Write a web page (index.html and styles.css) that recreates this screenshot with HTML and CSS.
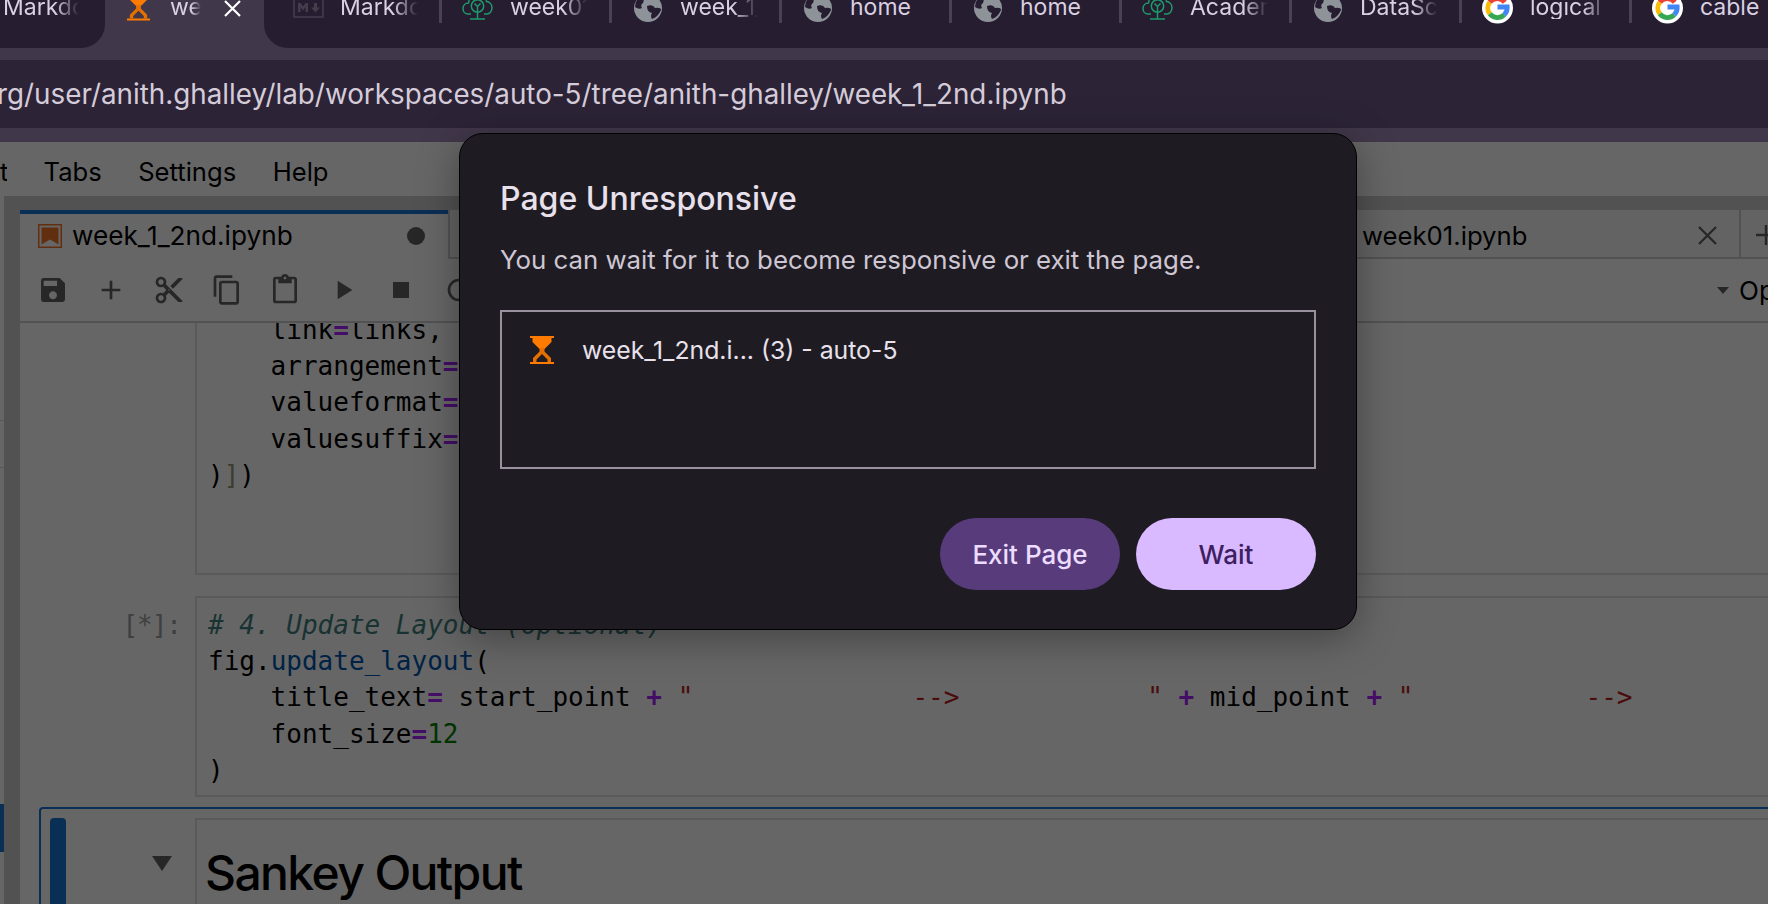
FILE: index.html
```html
<!DOCTYPE html>
<html lang="en">
<head>
<meta charset="utf-8">
<title>Page Unresponsive</title>
<link rel="stylesheet" href="styles.css">
</head>
<body>
<svg class="defs" width="0" height="0" aria-hidden="true">
  <symbol id="hourglass" viewBox="0 0 24 28">
    <path d="M0 0h24v2H0zM0 26h24v2H0z" fill="#ff7b00"/>
    <path d="M2.500 2h19v4l-7 7h-5l-7-7z" fill="#ff7b00"/>
    <path d="M9.500 12v3.500L3 22v4h3.500v-2.500L12 18l5.500 5.500V26H21v-4l-6.500-6.500V12z" fill="#e56f00"/>
  </symbol>
  <symbol id="globe" viewBox="0 0 28 28">
    <circle cx="14" cy="14" r="14" fill="#8e9399"/>
    <path d="M7 2 Q11 5 9 9 Q6 11 8 14 Q5 16 1 13 Q1 6 7 2zM13 12 Q19 10 21 14 Q27 13 27 16 Q24 23 18 25 Q16 22 18 19 Q13 18 13 12z" fill="#261d30"/>
  </symbol>
  <symbol id="academy" viewBox="0 0 31 28">
    <path d="M9 22H6C3 22 1 19.500 1 16.500C1 13 3.500 11 6.500 11C7.500 5 11 1 15.500 1C20 1 23.500 4 24.500 9.500C27.500 9.500 30 12.500 30 15.500C30 19.500 27.500 22 25 22H22" fill="none" stroke="#1f9a6b" stroke-width="1.500"/>
    <circle cx="15.500" cy="14" r="6.200" fill="none" stroke="#1f9a6b" stroke-width="1.500"/>
    <path d="M15.500 20.500V27M15.500 14.500V20M15.500 14.500l-3-3M15.500 14.500l3-3M8 27h15" fill="none" stroke="#1f9a6b" stroke-width="1.500"/>
  </symbol>
  <symbol id="google" viewBox="0 0 32 32">
    <circle cx="16" cy="16" r="16" fill="#fff"/>
    <path d="M23.500 10 A10 10 0 0 0 8 10" fill="none" stroke="#ea4335" stroke-width="5"/>
    <path d="M8 10 A10 10 0 0 0 8 22" fill="none" stroke="#fbbc05" stroke-width="5"/>
    <path d="M8 22 A10 10 0 0 0 23 23" fill="none" stroke="#34a853" stroke-width="5"/>
    <path d="M23 23 A10 10 0 0 0 26 15 H16" fill="none" stroke="#4285f4" stroke-width="5"/>
  </symbol>
  <symbol id="markdown" viewBox="0 0 31 21">
    <path d="M1 1h29v19H1z" fill="none" stroke="#443e4c" stroke-width="1.600"/>
    <path d="M5 15V6h2.500L10 9.500 12.500 6H15v9h-2.500v-5L10 13.500 7.500 10v5zM21 6h3v4.500h3l-4.500 5-4.500-5h3z" fill="#443e4c"/>
  </symbol>
</svg>

<header class="chrome">
  <div class="tabstrip">
    <div class="tabgroup tabgroup-left">
      <span class="tab-label tab-label-left">Markdown</span>
    </div>
    <div class="tab-active">
      <svg class="ico-hourglass-tab"><use href="#hourglass"/></svg>
      <span class="tab-label tab-label-active">week_1</span>
      <svg class="ico-close" viewBox="0 0 17 17"><path d="M1 1l15 15M16 1L1 16" stroke="#fff" stroke-width="2.200" fill="none"/></svg>
    </div>
    <div class="tabgroup tabgroup-right">
      <div class="tab tab-first"><span class="tabicon"><svg class="ico-md"><use href="#markdown"/></svg></span><span class="tab-label">Markdown</span></div><i class="sep"></i>
      <div class="tab"><span class="tabicon"><svg class="ico-acad"><use href="#academy"/></svg></span><span class="tab-label">week01.ipynb</span></div><i class="sep"></i>
      <div class="tab"><span class="tabicon"><svg class="ico-globe"><use href="#globe"/></svg></span><span class="tab-label">week_1_2nd</span></div><i class="sep"></i>
      <div class="tab"><span class="tabicon"><svg class="ico-globe"><use href="#globe"/></svg></span><span class="tab-label tab-label-plain">home</span></div><i class="sep"></i>
      <div class="tab"><span class="tabicon"><svg class="ico-globe"><use href="#globe"/></svg></span><span class="tab-label tab-label-plain">home</span></div><i class="sep"></i>
      <div class="tab"><span class="tabicon"><svg class="ico-acad"><use href="#academy"/></svg></span><span class="tab-label">Academy</span></div><i class="sep"></i>
      <div class="tab"><span class="tabicon"><svg class="ico-globe"><use href="#globe"/></svg></span><span class="tab-label">DataScience</span></div><i class="sep"></i>
      <div class="tab"><span class="tabicon"><svg class="ico-g"><use href="#google"/></svg></span><span class="tab-label">logical</span></div><i class="sep"></i>
      <div class="tab"><span class="tabicon"><svg class="ico-g"><use href="#google"/></svg></span><span class="tab-label tab-label-plain">cable</span></div>
    </div>
  </div>
  <div class="address"><span class="url">rg/user/anith.ghalley/lab/workspaces/auto-5/tree/anith-ghalley/week_1_2nd.ipynb</span></div>
</header>

<main class="page">
  <nav class="menubar">
    <span class="menu-cut">t</span>
    <span>Tabs</span>
    <span>Settings</span>
    <span>Help</span>
  </nav>
  <div class="workspace">
    <aside class="rail">
      <i class="rail-line rail-line-a"></i>
      <i class="rail-line rail-line-b"></i>
      <i class="rail-active"></i>
    </aside>
    <section class="panel">
      <div class="doc-tabs">
        <div class="doc-tab doc-tab-active">
          <svg class="ico-nb" viewBox="0 0 24 24"><path d="M.75.75h22.500v22.500H.75z" fill="none" stroke="#f37726" stroke-width="1.500"/><path d="M3.500 3.500h17v17L12 15.500l-8.500 5z" fill="#f37726"/></svg>
          <span class="doc-name">week_1_2nd.ipynb</span>
          <i class="dirty-dot"></i>
        </div>
        <div class="doc-tab-spacer"></div>
        <div class="doc-tab-other">
          <span class="doc-name">week01.ipynb</span>
          <svg class="ico-x" viewBox="0 0 20 20"><path d="M1 1l18 18M19 1L1 19" stroke="#616161" stroke-width="2.400" fill="none"/></svg>
        </div>
        <div class="doc-tab-add"><svg class="ico-plus" viewBox="0 0 20 20"><path d="M10 0v20M0 10h20" stroke="#616161" stroke-width="2.400"/></svg></div>
      </div>
      <div class="toolbar">
        <span class="tool"><svg viewBox="0 0 24 24"><path d="M17 3H5c-1.110 0-2 .9-2 2v14c0 1.100.89 2 2 2h14c1.100 0 2-.9 2-2V7l-4-4zm-5 16c-1.660 0-3-1.340-3-3s1.340-3 3-3 3 1.340 3 3-1.340 3-3 3zm3-10H5V5h10v4z"/></svg></span>
        <span class="tool"><svg viewBox="0 0 24 24"><path d="M19 13h-6v6h-2v-6H5v-2h6V5h2v6h6v2z"/></svg></span>
        <span class="tool"><svg viewBox="0 0 24 24"><path d="M9.640 7.640c.23-.5.36-1.050.36-1.640 0-2.210-1.790-4-4-4S2 3.790 2 6s1.790 4 4 4c.59 0 1.140-.13 1.640-.36L10 12l-2.360 2.360C7.140 14.130 6.590 14 6 14c-2.210 0-4 1.790-4 4s1.790 4 4 4 4-1.790 4-4c0-.59-.13-1.140-.36-1.640L12 14l7 7h3v-1L9.640 7.640zM6 8c-1.100 0-2-.89-2-2s.9-2 2-2 2 .89 2 2-.9 2-2 2zm0 12c-1.100 0-2-.89-2-2s.9-2 2-2 2 .89 2 2-.9 2-2 2zm6-7.500c-.28 0-.5-.22-.5-.5s.22-.5.5-.5.5.22.5.5-.22.5-.5.5zM19 3l-6 6 2 2 7-7V3z"/></svg></span>
        <span class="tool"><svg viewBox="0 0 24 24"><path d="M16 1H4c-1.100 0-2 .9-2 2v14h2V3h12V1zm3 4H8c-1.100 0-2 .9-2 2v14c0 1.100.9 2 2 2h11c1.100 0 2-.9 2-2V7c0-1.100-.9-2-2-2zm0 16H8V7h11v14z"/></svg></span>
        <span class="tool"><svg viewBox="0 0 24 24"><path d="M19 2h-4.180C14.400.84 13.300 0 12 0c-1.300 0-2.400.84-2.820 2H5c-1.100 0-2 .9-2 2v16c0 1.100.9 2 2 2h14c1.100 0 2-.9 2-2V4c0-1.100-.9-2-2-2zm-7 0c.55 0 1 .45 1 1s-.45 1-1 1-1-.45-1-1 .45-1 1-1zm7 18H5V4h2v3h10V4h2v16z"/></svg></span>
        <span class="tool"><svg viewBox="0 0 24 24"><path d="M8 5v14l11-7z"/></svg></span>
        <span class="tool"><svg viewBox="0 0 24 24"><path d="M6 6h12v12H6z"/></svg></span>
        <span class="tool"><svg viewBox="0 0 24 24"><circle cx="12" cy="12" r="7.500" fill="none" stroke="#616161" stroke-width="2"/></svg></span>
        <span class="toolbar-spacer"></span>
        <svg class="ico-caret" viewBox="0 0 12 7"><path d="M0 0h12L6 7z"/></svg>
        <span class="kernel">Op</span>
      </div>
      <div class="notebook">
        <div class="cell cell-first">
<pre class="code code-first">    link<b class="op">=</b>links,
    arrangement<b class="op">=</b>
    valueformat<b class="op">=</b>
    valuesuffix<b class="op">=</b>
)<span class="br">]</span>)</pre>
        </div>
        <div class="cell-row">
          <div class="prompt">[*]:</div>
          <div class="cell cell-second">
<pre class="code"><em class="com"># 4. Update Layout (optional)</em>
fig.<span class="fn">update_layout</span>(
    title_text<b class="op">=</b> start_point <b class="op">+</b> <span class="str">"              --&gt;            "</span> <b class="op">+</b> mid_point <b class="op">+</b> <span class="str">"           --&gt;</span>
    font_size<b class="op">=</b><span class="num">12</span>
)</pre>
          </div>
        </div>
        <div class="cell-selected">
          <i class="collapser"></i>
          <div class="fold"><svg class="ico-fold" viewBox="0 0 20 15"><path d="M0 0h20L10 15z"/></svg></div>
          <div class="cell cell-md"><h1 class="md-h1">Sankey Output</h1></div>
        </div>
      </div>
    </section>
  </div>
  <div class="scrim"></div>
</main>

<div class="dialog" role="dialog">
  <h2 class="dlg-title">Page Unresponsive</h2>
  <p class="dlg-desc">You can wait for it to become responsive or exit the page.</p>
  <div class="dlg-list">
    <div class="dlg-row">
      <svg class="ico-hourglass"><use href="#hourglass"/></svg>
      <span>week_1_2nd.i... (3) - auto-5</span>
    </div>
  </div>
  <div class="dlg-actions">
    <button class="btn btn-exit">Exit Page</button>
    <button class="btn btn-wait">Wait</button>
  </div>
</div>
</body>
</html>
```
FILE: styles.css
```css
* { box-sizing: border-box; }
html, body { margin: 0; padding: 0; width: 1768px; height: 904px; overflow: hidden; }
body { display: flex; flex-direction: column; font-family: Inter, "Liberation Sans", sans-serif; background: #fff; }
.defs { position: absolute; }

/* browser chrome */
.chrome { background: #41374a; height: 142px; flex: none; }
.tabstrip { display: flex; height: 48px; overflow: hidden; color: #d9d0e2; font-size: 23px; line-height: 23px; }
.tabgroup { background: #261d30; height: 48px; display: flex; align-items: flex-start; }
.tabgroup-left { width: 105px; border-bottom-right-radius: 24px; padding-left: 3px; }
.tabgroup-right { flex: 1; min-width: 0; border-bottom-left-radius: 24px; overflow: hidden; }
.tab-active { width: 159px; flex: none; display: flex; align-items: flex-start; padding-left: 22px; }
.tab { width: 167px; flex: none; display: flex; align-items: flex-start; padding-left: 20px; }
.tab-first { width: 175px; padding-left: 29px; }
.tab-first .tabicon { margin-right: 16px; }
.tabicon { width: 31px; margin-right: 17px; flex: none; display: flex; justify-content: center; }
.tab-label { display: block; width: 78px; margin-top: -4px; white-space: nowrap; overflow: hidden; -webkit-mask-image: linear-gradient(90deg, #000 68%, transparent 100%); mask-image: linear-gradient(90deg, #000 68%, transparent 100%); }
.tab-label-plain { -webkit-mask-image: none; mask-image: none; }
.tab-label-left { width: 76px; }
.tab-label-active { width: 31px; margin-left: 20px; margin-right: 23px; }
.sep { width: 3px; height: 23px; background: #4a4156; flex: none; }
.ico-hourglass-tab { width: 23px; height: 28px; margin-top: -7px; flex: none; }
.ico-close { width: 17px; height: 17px; flex: none; }
.ico-md { width: 31px; height: 21px; margin-top: -3px; }
.ico-acad { width: 31px; height: 28px; margin-top: -8px; }
.ico-globe { width: 28px; height: 28px; margin-top: -6px; }
.ico-g { width: 32px; height: 32px; margin-top: -8px; }

.address { height: 68px; margin-top: 12px; background: #2c2337; display: flex; align-items: center; overflow: hidden; }
.url { color: #d5ccd9; font-size: 27.800px; margin-left: -3px; white-space: nowrap; }

/* jupyter page */
.page { flex: 1; position: relative; overflow: hidden; display: flex; flex-direction: column; background: #fff; color: #000; }
.scrim { position: absolute; inset: 0; background: rgba(0, 0, 0, .6); }
.menubar { height: 54px; flex: none; display: flex; align-items: center; gap: 36.500px; font-size: 25.600px; padding-top: 4px; white-space: nowrap; }
.menu-cut { width: 7px; overflow: hidden; }
.workspace { flex: 1; min-height: 0; display: flex; background: #ccc; }
.rail { width: 4px; flex: none; background: #fff; display: flex; flex-direction: column; }
.rail-line { display: block; height: 1px; background: #ddd; }
.rail-line-a { margin-top: 224px; }
.rail-line-b { margin-top: 46px; }
.rail-active { display: block; width: 4px; height: 48px; margin-top: 336px; background: #1976d2; }
.panel { margin-left: 16px; flex: 1; min-width: 0; display: flex; flex-direction: column; margin-top: 14px; background: #fff; overflow: hidden; }

.doc-tabs { height: 49px; flex: none; display: flex; background: #f8f8f8; border-bottom: 2px solid #ccc; }
.doc-tab { display: flex; align-items: center; }
.doc-tab-active { width: 428px; height: 49px; background: #fff; border-top: 4px solid #1976d2; padding: 0 0 2px 18px; }
.doc-name { font-size: 25.700px; white-space: nowrap; }
.doc-tab-spacer { flex: 1; border-left: 2px solid #ccc; }
.doc-tab-other { width: 377px; display: flex; align-items: center; flex: none; padding: 4px 22px 0 0; justify-content: space-between; }
.doc-tab-add { flex: 1 0 29px; max-width: 29px; border-left: 2px solid #ccc; display: flex; align-items: center; padding: 3px 0 0 15px; }
.ico-nb { width: 24px; height: 24px; flex: none; }
.doc-tab-active .doc-name { margin-left: 10px; flex: 1; font-size: 26.200px; }
.dirty-dot { display: block; width: 18px; height: 18px; border-radius: 50%; background: #616161; margin-right: 23px; }
.ico-x { width: 19px; height: 19px; }
.ico-plus { width: 20px; height: 20px; flex: none; }

.toolbar { height: 64px; flex: none; display: flex; align-items: center; border-bottom: 2px solid #ccc; padding-left: 4px; background: #fff; white-space: nowrap; overflow: hidden; }
.tool { width: 58px; height: 32px; display: flex; justify-content: center; flex: none; }
.tool svg { width: 32px; height: 32px; fill: #616161; }
.toolbar-spacer { flex: 1; }
.ico-caret { width: 12px; height: 7px; fill: #616161; margin-right: 10px; flex: none; }
.kernel { font-size: 26px; width: 29px; overflow: hidden; flex: none; }

.notebook { flex: 1; min-height: 0; overflow: hidden; background: #fff; }
.cell { border: 2px solid #e0e0e0; border-right: 0; background: #fff; }
.cell-first { margin-left: 175px; height: 252px; border-top: 0; overflow: hidden; }
.code { margin: 0; padding-left: 11px; font-family: "DejaVu Sans Mono", monospace; font-size: 26px; line-height: 36.200px; color: #000; white-space: pre; }
.code-first { margin-top: -11px; }
.cell-row { display: flex; margin-top: 21px; }
.prompt { width: 175px; flex: none; text-align: right; padding-right: 14px; padding-top: 11px; font-family: "DejaVu Sans Mono", monospace; font-size: 26px; line-height: 36px; color: #9e9e9e; letter-spacing: -1px; }
.cell-second { flex: 1; min-width: 0; height: 201px; padding-top: 9px; overflow: hidden; }
.op { color: #aa22ff; font-weight: 700; }
.br { color: #999977; }
.com { color: #408080; font-style: italic; }
.fn { color: #0055aa; }
.str { color: #ba2121; }
.num { color: #008000; }

.cell-selected { margin: 10px 0 0 19px; height: 200px; border: 2px solid #1976d2; border-right: 0; border-bottom: 0; border-radius: 4px 0 0 0; display: flex; padding: 9px 0 0 9px; }
.collapser { display: block; width: 16px; height: 120px; background: #1976d2; border-radius: 4px 4px 0 0; flex: none; }
.fold { width: 129px; flex: none; padding: 38px 0 0 86px; }
.ico-fold { display: block; width: 20px; height: 15px; fill: #616161; }
.cell-md { flex: 1; min-width: 0; height: 200px; padding-left: 8px; }
.md-h1 { margin: 25px 0 0; font-size: 48px; line-height: 56px; font-weight: 500; color: #000; letter-spacing: -1.600px; white-space: nowrap; }

/* dialog */
.dialog { position: absolute; left: 459px; top: 133px; width: 898px; height: 497px; background: #1e1c22; border: 1px solid #000; border-radius: 24px; box-shadow: 0 8px 40px rgba(0, 0, 0, .35); padding: 0 40px; display: flex; flex-direction: column; }
.dlg-title { margin: 45px 0 0; font-size: 32px; line-height: 40px; font-weight: 500; color: #e8e1ec; }
.dlg-desc { margin: 25px 0 0; font-size: 25.800px; line-height: 32px; font-weight: 400; color: #cfc6d4; }
.dlg-list { margin-top: 34px; height: 159px; border: 2px solid #9a919e; padding: 24px 28px; flex: none; }
.dlg-row { display: flex; align-items: center; gap: 28px; font-size: 24.800px; line-height: 28px; color: #e8e1ec; }
.ico-hourglass { width: 24px; height: 28px; flex: none; }
.dlg-actions { margin-top: 49px; display: flex; justify-content: flex-end; gap: 16px; }
.btn { width: 180px; height: 72px; border: 0; border-radius: 36px; font-family: Inter, sans-serif; font-size: 26px; font-weight: 500; padding: 0; }
.btn-exit { background: #573b7b; color: #ecdcff; }
.btn-wait { background: #d9b9ff; color: #3c2060; }
```
